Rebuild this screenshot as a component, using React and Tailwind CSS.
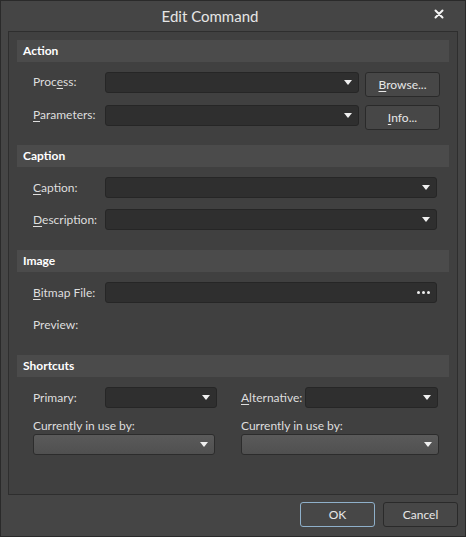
import React from "react";

const font = { fontFamily: '"Segoe UI", Lato, "Noto Sans", sans-serif' };

const Key = ({ children }) => <span className="underline underline-offset-2">{children}</span>;

const Arrow = () => (
  <svg width="8" height="5" viewBox="0 0 8 5" className="shrink-0">
    <path d="M0 0h8L4 5z" fill="#f0f0f0" />
  </svg>
);

const Combo = ({ className = "", disabled = false, dots = false }) => (
  <div
    className={`h-[21px] rounded-[3px] border flex items-center justify-end pr-[4px] ${
      disabled
        ? "bg-gradient-to-b from-[#5a5a5a] to-[#505050] border-[#2c2c2c]"
        : "bg-[#2f2f2f] border-[#262626]"
    } ${className}`}
  >
    {dots ? (
      <span className="flex gap-[2px] pr-[2px]">
        <span className="w-[3px] h-[3px] bg-[#eeeeee] rounded-full" />
        <span className="w-[3px] h-[3px] bg-[#eeeeee] rounded-full" />
        <span className="w-[3px] h-[3px] bg-[#eeeeee] rounded-full" />
      </span>
    ) : (
      <span className="pr-[2px]">
        <Arrow />
      </span>
    )}
  </div>
);

const Btn = ({ children, className = "" }) => (
  <button
    className={`h-[25px] rounded-[3px] border bg-[#474747] text-[12px] text-[#e8e8e8] flex items-center justify-center ${className}`}
  >
    {children}
  </button>
);

const Header = ({ title }) => (
  <div className="h-[22px] bg-[#4b4b4b] flex items-center pl-[6px] text-[12px] font-bold text-white">
    {title}
  </div>
);

const Label = ({ children, className = "" }) => (
  <div className={`text-[12px] text-[#dedede] leading-none ${className}`}>{children}</div>
);

export default function App() {
  return (
    <div style={font} className="w-[466px] h-[537px] bg-[#454545] border border-[#2a2a2a] flex flex-col overflow-hidden">
      <div className="h-[30px] relative flex items-center justify-center shrink-0 pr-[46px]">
        <span className="text-[15px] text-[#e6e6e6] pt-[1px]">Edit Command</span>
        <svg className="absolute right-[21px] top-[8px]" width="10" height="10" viewBox="0 0 10 10">
          <path d="M1.5 1.5l7 7M8.5 1.5l-7 7" stroke="#f4f4f4" strokeWidth="2" strokeLinecap="round" />
        </svg>
      </div>

      <div className="mx-[7px] h-[464px] border border-[#2e2e2e] bg-[#404040] px-[8px] pt-[8px] flex flex-col shrink-0">
        <Header title="Action" />
        <div className="pl-[16px] pt-[10px] flex flex-col gap-[8px]">
          <div className="flex items-start">
            <Label className="w-[72px] pt-[4px]">
              Proc<Key>e</Key>ss:
            </Label>
            <Combo className="w-[254px] mt-0" />
            <Btn className="w-[75px] ml-[6px] border-[#2a2a2a]">
              <Key>B</Key>rowse...
            </Btn>
          </div>
          <div className="flex items-start">
            <Label className="w-[72px] pt-[4px]">
              <Key>P</Key>arameters:
            </Label>
            <Combo className="w-[254px]" />
            <Btn className="w-[75px] ml-[6px] border-[#2a2a2a]">
              <Key>I</Key>nfo...
            </Btn>
          </div>
        </div>

        <div className="mt-[15px]">
          <Header title="Caption" />
        </div>
        <div className="pl-[16px] pr-[12px] pt-[10px] flex flex-col gap-[11px]">
          <div className="flex items-center">
            <Label className="w-[72px]">
              <Key>C</Key>aption:
            </Label>
            <Combo className="flex-1" />
          </div>
          <div className="flex items-center">
            <Label className="w-[72px]">
              <Key>D</Key>escription:
            </Label>
            <Combo className="flex-1" />
          </div>
        </div>

        <div className="mt-[20px]">
          <Header title="Image" />
        </div>
        <div className="pl-[16px] pr-[12px] pt-[10px] flex flex-col">
          <div className="flex items-center">
            <Label className="w-[72px]">
              <Key>B</Key>itmap File:
            </Label>
            <Combo className="flex-1" dots />
          </div>
          <Label className="mt-[16px]">Preview:</Label>
        </div>

        <div className="mt-[24px]">
          <Header title="Shortcuts" />
        </div>
        <div className="pl-[16px] pt-[10px] flex">
          <div className="w-[208px] flex flex-col">
            <div className="flex items-center">
              <Label className="w-[72px]">Primary:</Label>
              <Combo className="w-[112px]" />
            </div>
            <Label className="mt-[12px]">Currently in use by:</Label>
            <Combo className="w-[182px] mt-[2px]" disabled />
          </div>
          <div className="flex flex-col">
            <div className="flex items-center">
              <Label className="w-[64px]">
                <Key>A</Key>lternative:
              </Label>
              <Combo className="w-[133px]" />
            </div>
            <Label className="mt-[12px]">Currently in use by:</Label>
            <Combo className="w-[198px] mt-[2px]" disabled />
          </div>
        </div>
      </div>

      <div className="flex justify-end gap-[8px] pr-[7px] pt-[7px]">
        <Btn className="w-[75px] border-[#8fb0ca]">OK</Btn>
        <Btn className="w-[75px] border-[#2a2a2a]">Cancel</Btn>
      </div>
    </div>
  );
}
